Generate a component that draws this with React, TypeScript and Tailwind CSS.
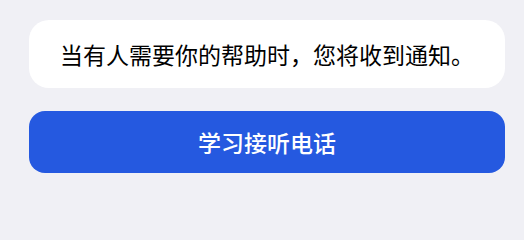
export default function App() {
  return (
    <div
      className="min-h-screen w-full bg-[#f0f0f5] pt-[20px] pl-[29px]"
      style={{ fontFamily: '"Noto Sans CJK SC", "Noto Sans", sans-serif' }}
    >
      <div className="flex w-[476px] flex-col gap-[23px]">
        <div className="flex h-[68px] items-center justify-center rounded-[20px] bg-white text-[23px] font-normal text-black">
          当有人需要你的帮助时，您将收到通知。
        </div>
        <button className="flex h-[62px] items-center justify-center rounded-[16px] bg-[#2559e0] text-[23px] font-medium text-white">
          学习接听电话
        </button>
      </div>
    </div>
  );
}
